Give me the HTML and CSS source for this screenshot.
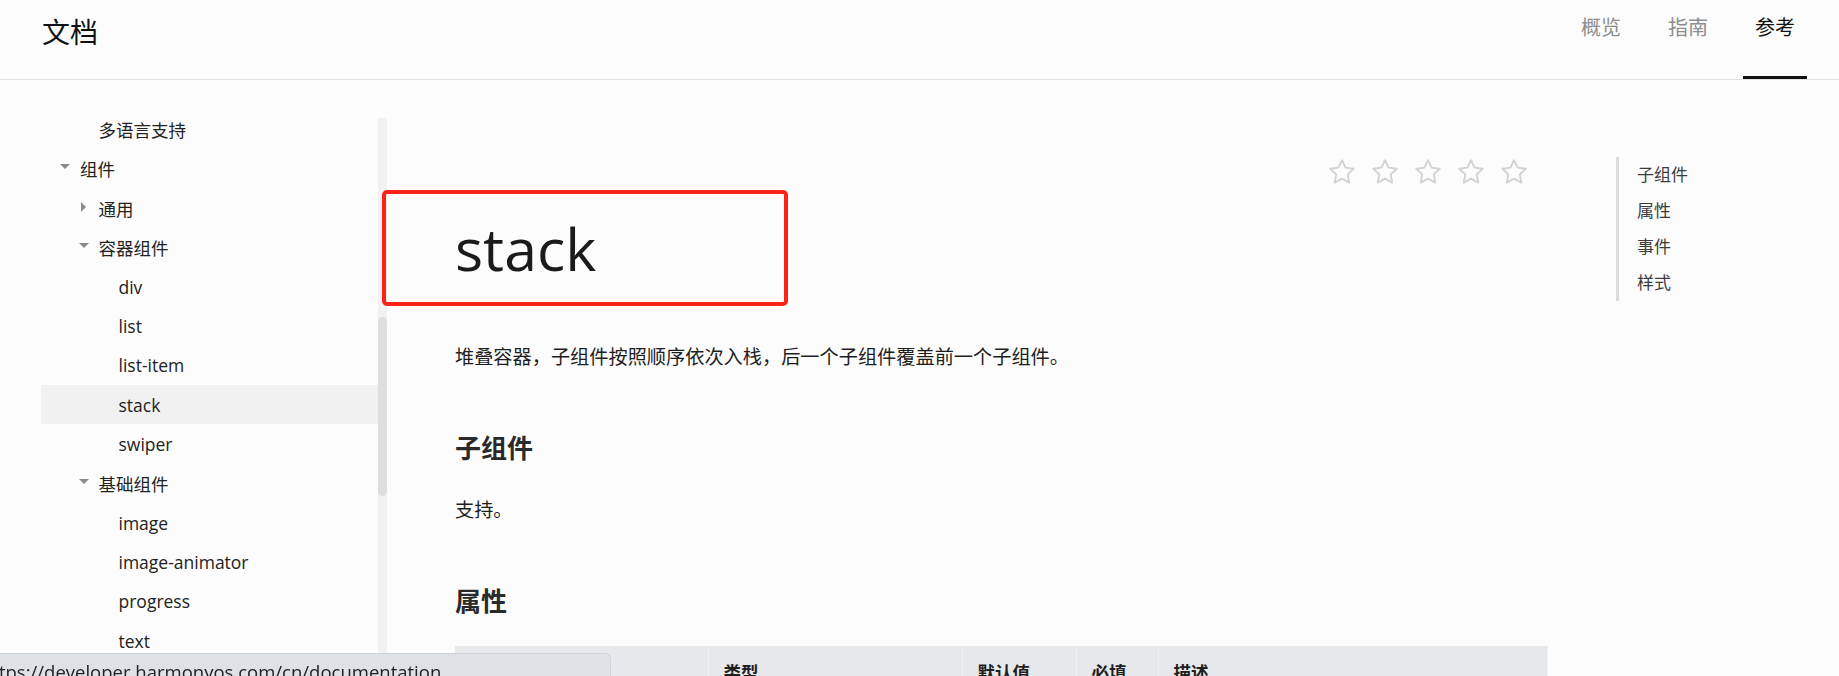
FILE: index.html
```html
<!DOCTYPE html>
<html lang="zh-CN">
<head>
<meta charset="utf-8">
<title>stack - 文档</title>
<link rel="stylesheet" href="styles.css">
</head>
<body>
<header class="topbar">
  <div class="brand">文档</div>
  <nav class="topnav">
    <a class="topnav-item">概览</a>
    <a class="topnav-item">指南</a>
    <a class="topnav-item is-active">参考</a>
  </nav>
</header>

<div class="page">
  <aside class="sidebar">
    <ul class="tree">
      <li class="tree-row lvl2">多语言支持</li>
      <li class="tree-row lvl1"><span class="caret caret-down"></span>组件</li>
      <li class="tree-row lvl2"><span class="caret caret-right"></span>通用</li>
      <li class="tree-row lvl2"><span class="caret caret-down"></span>容器组件</li>
      <li class="tree-row lvl3">div</li>
      <li class="tree-row lvl3">list</li>
      <li class="tree-row lvl3">list-item</li>
      <li class="tree-row lvl3 is-current">stack</li>
      <li class="tree-row lvl3">swiper</li>
      <li class="tree-row lvl2"><span class="caret caret-down"></span>基础组件</li>
      <li class="tree-row lvl3">image</li>
      <li class="tree-row lvl3">image-animator</li>
      <li class="tree-row lvl3">progress</li>
      <li class="tree-row lvl3">text</li>
    </ul>
    <div class="scrollbar"><div class="scrollbar-thumb"></div></div>
  </aside>

  <main class="content">
    <div class="rating">
      <svg class="star" viewBox="0 0 24 24"><path d="M12 2.6l2.85 5.95 6.55.85-4.8 4.55 1.2 6.5L12 17.3l-5.8 3.15 1.2-6.5-4.8-4.55 6.55-.85z"/></svg>
      <svg class="star" viewBox="0 0 24 24"><path d="M12 2.6l2.85 5.95 6.55.85-4.8 4.55 1.2 6.5L12 17.3l-5.8 3.15 1.2-6.5-4.8-4.55 6.55-.85z"/></svg>
      <svg class="star" viewBox="0 0 24 24"><path d="M12 2.6l2.85 5.95 6.55.85-4.8 4.55 1.2 6.5L12 17.3l-5.8 3.15 1.2-6.5-4.8-4.55 6.55-.85z"/></svg>
      <svg class="star" viewBox="0 0 24 24"><path d="M12 2.6l2.85 5.95 6.55.85-4.8 4.55 1.2 6.5L12 17.3l-5.8 3.15 1.2-6.5-4.8-4.55 6.55-.85z"/></svg>
      <svg class="star" viewBox="0 0 24 24"><path d="M12 2.6l2.85 5.95 6.55.85-4.8 4.55 1.2 6.5L12 17.3l-5.8 3.15 1.2-6.5-4.8-4.55 6.55-.85z"/></svg>
    </div>
    <h1 class="doc-title">stack</h1>
    <p class="doc-text first">堆叠容器，子组件按照顺序依次入栈，后一个子组件覆盖前一个子组件。</p>
    <h2 class="doc-h2">子组件</h2>
    <p class="doc-text">支持。</p>
    <h2 class="doc-h2">属性</h2>
    <table class="attr-table">
      <thead>
        <tr>
          <th class="c-name">名称</th>
          <th class="c-type">类型</th>
          <th class="c-def">默认值</th>
          <th class="c-req">必填</th>
          <th class="c-desc">描述</th>
        </tr>
      </thead>
    </table>
  </main>

  <nav class="toc">
    <a class="toc-item">子组件</a>
    <a class="toc-item">属性</a>
    <a class="toc-item">事件</a>
    <a class="toc-item">样式</a>
  </nav>
</div>

<div class="annotation-box"></div>

<div class="status-bubble"><span class="status-text">https://developer.harmonyos.com/cn/documentation</span></div>
</body>
</html>
```

FILE: styles.css
```css
* { box-sizing: border-box; }

html, body {
  margin: 0;
  padding: 0;
  height: 676px;
  overflow: hidden;
  background: #fcfcfc;
  font-family: "Open Sans", "Noto Sans CJK SC", sans-serif;
  color: #222;
}

/* ---------- top bar ---------- */
.topbar {
  height: 80px;
  border-bottom: 1px solid #e2e2e2;
  display: flex;
  justify-content: space-between;
  align-items: stretch;
  padding: 0 32px 0 42px;
}

.brand {
  font-size: 28px;
  line-height: 64px;
  color: #111;
}

.topnav {
  display: flex;
  gap: 23px;
}

.topnav-item {
  display: block;
  padding: 13px 12px 0;
  font-size: 20px;
  line-height: 30px;
  color: #8e8e8e;
  border-bottom: 3px solid transparent;
  height: 79px;
}

.topnav-item.is-active {
  color: #111;
  border-bottom-color: #111;
}

/* ---------- page ---------- */
.page {
  display: flex;
  height: 596px;
  overflow: hidden;
}

.sidebar {
  width: 387px;
  flex: none;
  display: flex;
  padding: 38px 0 0 41px;
}

.tree {
  list-style: none;
  margin: -8px 0 0;
  padding: 0;
  flex: 1;
  overflow: hidden;
}

.tree-row {
  height: 39.3px;
  display: flex;
  align-items: center;
  font-size: 17.5px;
  color: #222;
  white-space: nowrap;
}

.tree-row.lvl1 { padding-left: 39px; }
.tree-row.lvl2 { padding-left: 57.5px; }
.tree-row.lvl3 { padding-left: 77.5px; }

.tree-row.is-current { background: #f1f1f1; }

.caret {
  width: 0;
  height: 0;
  flex: none;
  position: relative;
}

.caret-down {
  border-left: 5px solid transparent;
  border-right: 5px solid transparent;
  border-top: 5px solid #8a8a8a;
  margin-left: -20px;
  margin-right: 10px;
  top: -2px;
}

.caret-right {
  border-top: 5px solid transparent;
  border-bottom: 5px solid transparent;
  border-left: 5px solid #8a8a8a;
  margin-left: -18px;
  margin-right: 13px;
  top: -1px;
}

.scrollbar {
  width: 9px;
  flex: none;
  background: #f1f1f1;
  height: 100%;
}

.scrollbar-thumb {
  margin-top: 199px;
  height: 179px;
  border-radius: 5px;
  background: #dedede;
}

/* ---------- content ---------- */
.content {
  width: 1161px;
  flex: none;
  padding-left: 68px;
}

.rating {
  display: flex;
  justify-content: flex-end;
  gap: 13px;
  margin-top: 77px;
  padding-right: 19px;
  height: 30px;
}

.star {
  width: 30px;
  height: 30px;
  fill: none;
  stroke: #d2d2d6;
  stroke-width: 1.5;
  stroke-linejoin: round;
}

.doc-title {
  margin: 21px 0 0;
  font-size: 59px;
  line-height: 80px;
  font-weight: 400;
  color: #1b1b1b;
}

.doc-text {
  margin: 28px 0 0;
  font-size: 19.2px;
  line-height: 31px;
  color: #1e1e1e;
}

.doc-text.first { margin-top: 53px; }

.doc-h2 {
  margin: 58px 0 0;
  font-size: 26px;
  line-height: 36px;
  font-weight: 700;
  color: #2a2a2a;
}

.attr-table {
  margin-top: 27px;
  width: 1093px;
  border-collapse: collapse;
  table-layout: fixed;
  font-size: 17.5px;
}

.attr-table th {
  background: #e7e8eb;
  text-align: left;
  font-weight: 700;
  color: #1e1e1e;
  padding: 12px 15px;
  line-height: 28px;
  border-right: 1px solid #f0f0f2;
}

.c-name { width: 253px; }
.c-type { width: 254px; }
.c-def  { width: 114px; }
.c-req  { width: 82px; }

/* ---------- toc ---------- */
.toc {
  margin: 77px 0 0 68px;
  border-left: 3px solid #dcdcdc;
  padding-left: 18px;
  height: 144px;
  display: flex;
  flex-direction: column;
}

.toc-item {
  font-size: 17px;
  line-height: 36px;
  color: #3c3c3c;
}

/* ---------- overlays ---------- */
.annotation-box {
  position: absolute;
  left: 382px;
  top: 190px;
  width: 406px;
  height: 116px;
  border: 4px solid #fb2216;
  border-radius: 5px;
}

.status-bubble {
  position: fixed;
  left: 0;
  top: 653px;
  width: 611px;
  height: 40px;
  background: #dee1e6;
  border-top: 1px solid #cfd2d7;
  border-right: 1px solid #cfd2d7;
  border-top-right-radius: 6px;
  overflow: hidden;
  white-space: nowrap;
  padding-top: 3px;
}

.status-text {
  display: block;
  margin-left: -19px;
  font-family: "Open Sans", sans-serif;
  font-size: 18.5px;
  line-height: 30px;
  color: #202124;
}
```
